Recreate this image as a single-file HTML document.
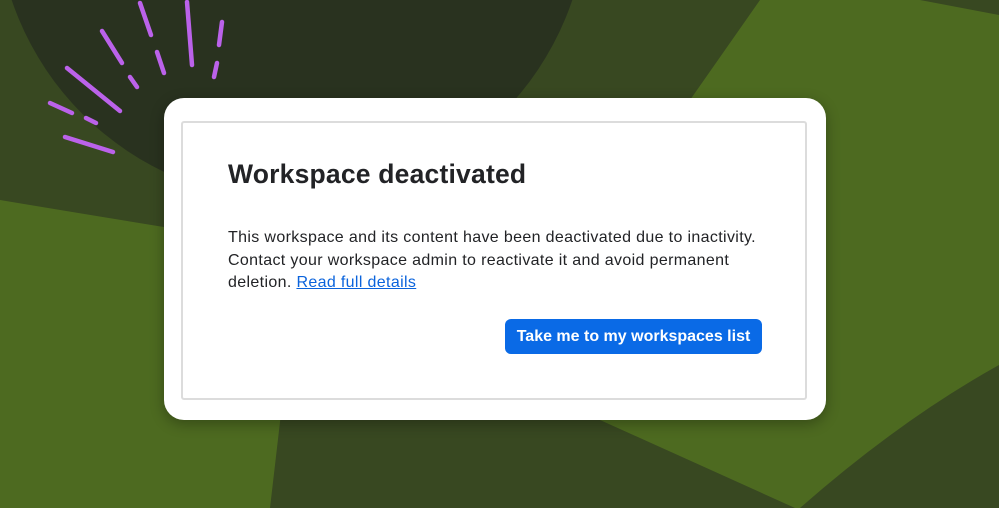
<!DOCTYPE html>
<html><head><meta charset="utf-8"><style>
html,body{margin:0;padding:0;width:999px;height:508px;overflow:hidden;background:#384821;font-family:"Liberation Sans",sans-serif}
svg.bg{position:absolute;left:0;top:0}
.card{position:absolute;left:164px;top:98px;width:662px;height:322px;background:#fff;border-radius:20px;box-shadow:0 4px 14px rgba(0,0,0,.3)}
.inner{position:absolute;left:17px;top:23px;width:626px;height:279px;border:2px solid #dcdcdc;border-radius:3px;box-sizing:border-box}
h1{position:absolute;left:45px;top:36px;margin:0;font-size:26.5px;font-weight:bold;color:#222326;letter-spacing:.2px;white-space:nowrap}
p{position:absolute;left:45px;top:104px;margin:0;font-size:16px;line-height:22.5px;color:#222326;letter-spacing:.35px;width:550px}
a{color:#0a63dc;text-decoration:underline}
.btn{position:absolute;left:322px;top:196px;width:257px;height:35px;background:#0a6ae6;border-radius:6px;color:#fff;font-size:16px;font-weight:bold;line-height:35px;text-align:center}
</style></head><body>
<svg class="bg" width="999" height="508" viewBox="0 0 999 508">
<rect width="999" height="508" fill="#384821"/>
<path d="M0 200 Q90 215 170 228 L300 250 L270 508 L0 508 Z" fill="#4d6a20"/>
<path d="M760 0 L920 0 L999 15 L999 365 Q900 420 800 508 L795 508 L600 420 L650 200 L690 100 Z" fill="#4d6a20"/>
<circle cx="292" cy="-95" r="296" fill="#29321f"/>
<g stroke="#bb62ea" stroke-width="4.5" stroke-linecap="round" fill="none">
<path d="M140 3 L151 35"/><path d="M187 2 L192 65"/><path d="M222 22 L219 45"/><path d="M217 63 L214 77"/>
<path d="M102 31 L122 63"/><path d="M157 52 L164 73"/><path d="M67 68 L120 111"/><path d="M130 77 L137 87"/>
<path d="M50 103 L72 113"/><path d="M86 118 L96 123"/><path d="M65 137 L113 152"/>
</g>
</svg>
<div class="card"><div class="inner">
<h1>Workspace deactivated</h1>
<p>This workspace and its content have been deactivated due to inactivity. Contact your workspace admin to reactivate it and avoid permanent deletion. <a>Read full details</a></p>
<div class="btn">Take me to my workspaces list</div>
</div></div>
</body></html>
